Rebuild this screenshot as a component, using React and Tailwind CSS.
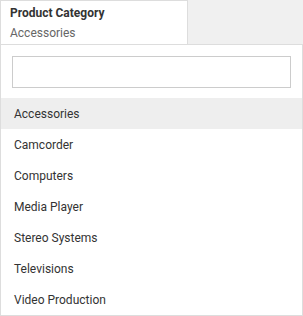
import React, { useState } from 'react';

const categories = [
  'Accessories',
  'Camcorder',
  'Computers',
  'Media Player',
  'Stereo Systems',
  'Televisions',
  'Video Production',
];

const App = () => {
  const [selected, setSelected] = useState('Accessories');
  const [search, setSearch] = useState('');

  const filtered = categories.filter(c =>
    c.toLowerCase().includes(search.toLowerCase())
  );

  return (
    <div
      className="w-[303px] h-[316px] bg-[#f0f0f0] text-[12px] text-[#333] overflow-hidden"
      style={{ fontFamily: 'Roboto, "Liberation Sans", sans-serif' }}
    >
      <div className="w-[188px] h-[44px] bg-white border-t border-l border-r border-[#dddddd] pl-[9px] pt-[4px]">
        <div className="font-bold leading-[17px] text-[#333]">Product Category</div>
        <div className="leading-[18px] mt-[2px] text-[#666]">{selected}</div>
      </div>
      <div className="h-[272px] bg-white border border-[#dddddd]">
        <div className="px-[11px] pt-[11px] pb-[10px]">
          <input
            type="text"
            value={search}
            onChange={(e) => setSearch(e.target.value)}
            className="w-full h-[32px] border border-[#cccccc] bg-white px-2 outline-none"
          />
        </div>
        <ul>
          {filtered.map(c => (
            <li
              key={c}
              onClick={() => setSelected(c)}
              className={`h-[31px] pt-[1px] leading-[30px] pl-[13px] cursor-pointer ${c === selected ? 'bg-[#eeeeee]' : ''}`}
            >
              {c}
            </li>
          ))}
        </ul>
      </div>
    </div>
  );
};

export default App;
